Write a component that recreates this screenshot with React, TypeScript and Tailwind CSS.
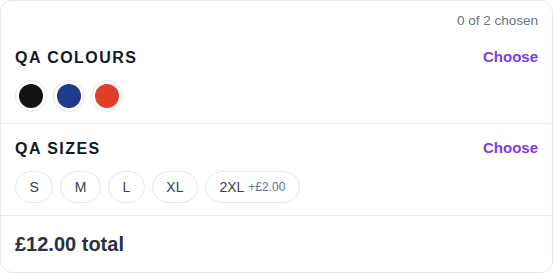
import React from 'react'

const colours = [
  { name: 'Black', hex: '#111111' },
  { name: 'Navy', hex: '#1e3a8f' },
  { name: 'Red', hex: '#e03e29' },
]

const sizes = [
  { label: 'S' },
  { label: 'M' },
  { label: 'L' },
  { label: 'XL' },
  { label: '2XL', extra: '+£2.00' },
]

const SectionHeader: React.FC<{ title: string }> = ({ title }) => (
  <div className="flex items-center justify-between">
    <h3 className="text-base leading-5 font-bold tracking-[0.09em] text-[#111827]">{title}</h3>
    <button className="text-[15px] leading-5 font-bold text-[#7c3aed] -mt-0.5">Choose</button>
  </div>
)

export default function App() {
  return (
    <div className="w-[553px] h-[273px] bg-white" style={{ fontFamily: '"Liberation Sans", Arial, sans-serif' }}>
      <div className="h-[273px] border border-[#e5e7eb] rounded-xl flex flex-col overflow-hidden">
        <div className="px-[14px] pt-[11px] pb-[11px] border-b border-[#e5e7eb]">
          <p className="text-right text-[13.5px] leading-[18px] text-[#6b7280]">0 of 2 chosen</p>
          <div className="mt-[18px]">
            <SectionHeader title="QA COLOURS" />
          </div>
          <div className="mt-3 flex gap-1.5">
            {colours.map((c) => (
              <button
                key={c.name}
                aria-label={c.name}
                className="w-8 h-8 rounded-full border border-[#e5e7eb] bg-white p-[3px]"
              >
                <span className="block w-full h-full rounded-full" style={{ backgroundColor: c.hex }} />
              </button>
            ))}
          </div>
        </div>
        <div className="px-[14px] pt-[15px] pb-3 border-b border-[#e5e7eb]">
          <SectionHeader title="QA SIZES" />
          <div className="mt-3 flex gap-[7px]">
            {sizes.map((s) => (
              <button
                key={s.label}
                className="h-8 px-[13.5px] rounded-full border border-[#e5e7eb] text-sm text-[#374151] flex items-center gap-1"
              >
                {s.label}
                {s.extra && <span className="text-xs text-[#6b7280]">{s.extra}</span>}
              </button>
            ))}
          </div>
        </div>
        <div className="px-[14px] pt-[14px]">
          <p className="text-xl leading-7 font-bold text-[#283241]">£12.00 total</p>
        </div>
      </div>
    </div>
  )
}
